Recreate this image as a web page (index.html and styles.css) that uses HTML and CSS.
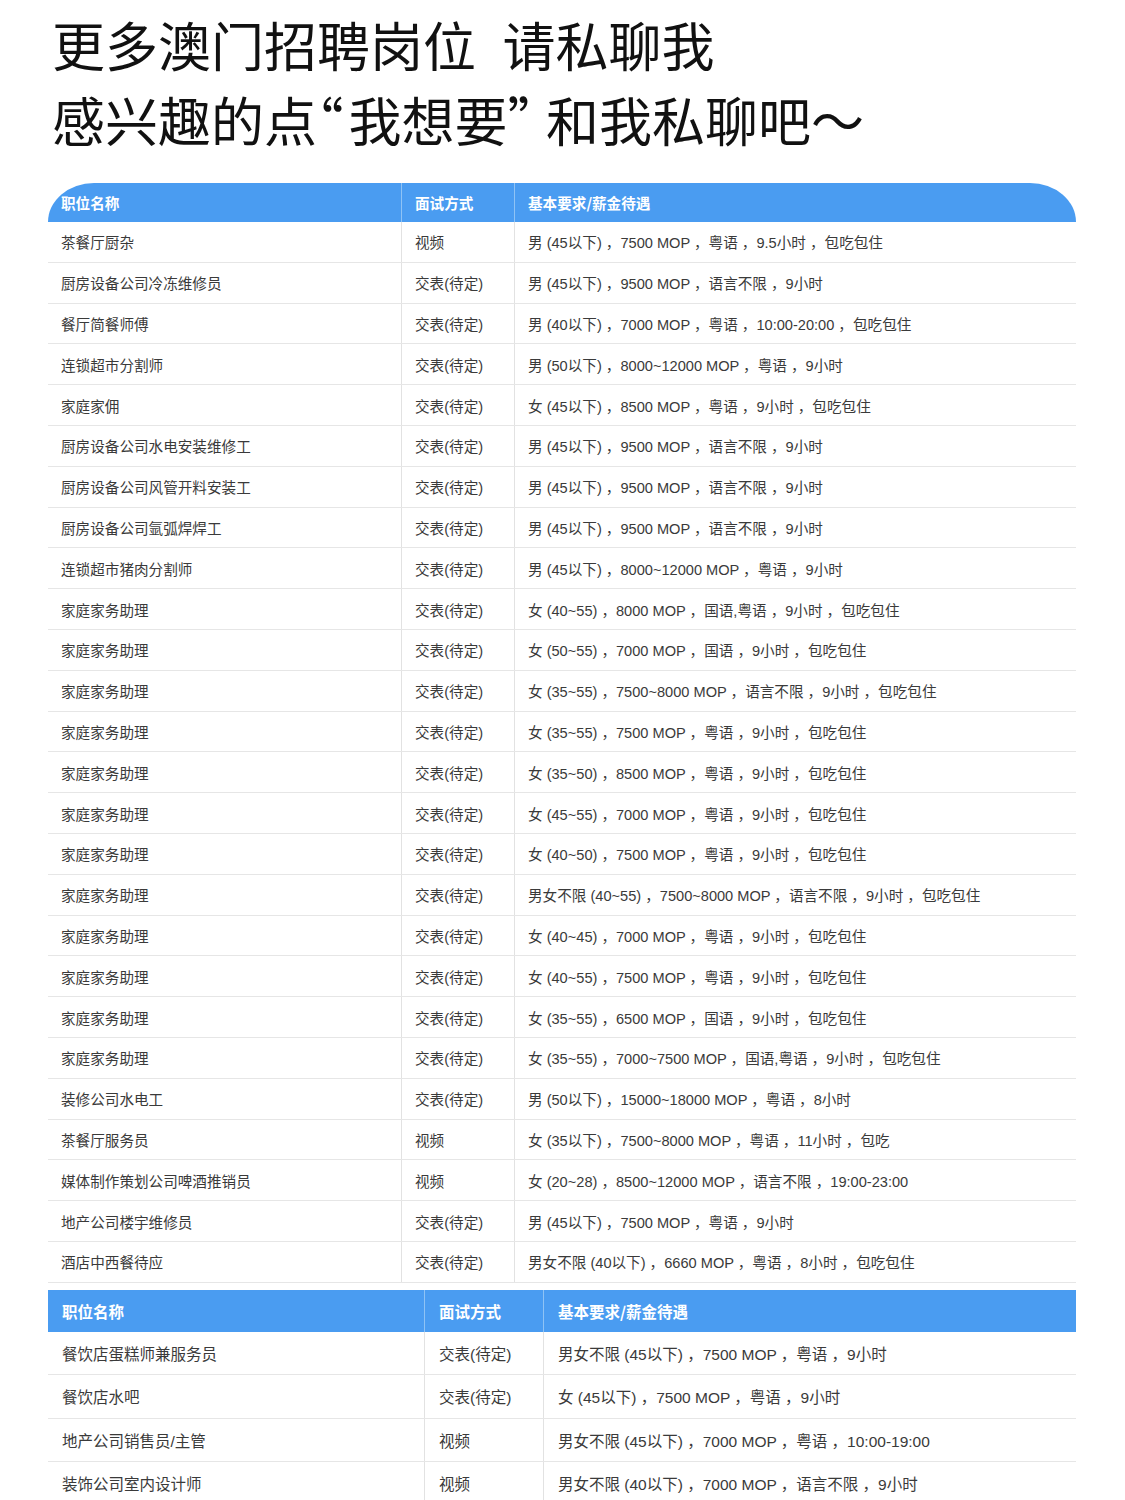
FILE: index.html
```html
<!DOCTYPE html>
<html lang="zh-CN">
<head>
<meta charset="utf-8">
<title>澳门招聘岗位</title>
<link rel="stylesheet" href="styles.css">
</head>
<body>
<div class="title">
  <div class="title-line">更多澳门招聘岗位&ensp;请私聊我</div>
  <div class="title-line">感兴趣的点<span class="ql">“</span>我想要<span class="qr">”</span>和我私聊吧～</div>
</div>

<div class="table t1">
  <div class="row head"><div class="c">职位名称</div><div class="c">面试方式</div><div class="c">基本要求/薪金待遇</div></div>
  <div class="row"><div class="c">茶餐厅厨杂</div><div class="c">视频</div><div class="c">男 (45以下) ，7500 MOP ，粤语 ，9.5小时 ，包吃包住</div></div>
  <div class="row"><div class="c">厨房设备公司冷冻维修员</div><div class="c">交表(待定)</div><div class="c">男 (45以下) ，9500 MOP ，语言不限 ，9小时</div></div>
  <div class="row"><div class="c">餐厅简餐师傅</div><div class="c">交表(待定)</div><div class="c">男 (40以下) ，7000 MOP ，粤语 ，10:00-20:00 ，包吃包住</div></div>
  <div class="row"><div class="c">连锁超市分割师</div><div class="c">交表(待定)</div><div class="c">男 (50以下) ，8000~12000 MOP ，粤语 ，9小时</div></div>
  <div class="row"><div class="c">家庭家佣</div><div class="c">交表(待定)</div><div class="c">女 (45以下) ，8500 MOP ，粤语 ，9小时 ，包吃包住</div></div>
  <div class="row"><div class="c">厨房设备公司水电安装维修工</div><div class="c">交表(待定)</div><div class="c">男 (45以下) ，9500 MOP ，语言不限 ，9小时</div></div>
  <div class="row"><div class="c">厨房设备公司风管开料安装工</div><div class="c">交表(待定)</div><div class="c">男 (45以下) ，9500 MOP ，语言不限 ，9小时</div></div>
  <div class="row"><div class="c">厨房设备公司氩弧焊焊工</div><div class="c">交表(待定)</div><div class="c">男 (45以下) ，9500 MOP ，语言不限 ，9小时</div></div>
  <div class="row"><div class="c">连锁超市猪肉分割师</div><div class="c">交表(待定)</div><div class="c">男 (45以下) ，8000~12000 MOP ，粤语 ，9小时</div></div>
  <div class="row"><div class="c">家庭家务助理</div><div class="c">交表(待定)</div><div class="c">女 (40~55) ，8000 MOP ，国语,粤语 ，9小时 ，包吃包住</div></div>
  <div class="row"><div class="c">家庭家务助理</div><div class="c">交表(待定)</div><div class="c">女 (50~55) ，7000 MOP ，国语 ，9小时 ，包吃包住</div></div>
  <div class="row"><div class="c">家庭家务助理</div><div class="c">交表(待定)</div><div class="c">女 (35~55) ，7500~8000 MOP ，语言不限 ，9小时 ，包吃包住</div></div>
  <div class="row"><div class="c">家庭家务助理</div><div class="c">交表(待定)</div><div class="c">女 (35~55) ，7500 MOP ，粤语 ，9小时 ，包吃包住</div></div>
  <div class="row"><div class="c">家庭家务助理</div><div class="c">交表(待定)</div><div class="c">女 (35~50) ，8500 MOP ，粤语 ，9小时 ，包吃包住</div></div>
  <div class="row"><div class="c">家庭家务助理</div><div class="c">交表(待定)</div><div class="c">女 (45~55) ，7000 MOP ，粤语 ，9小时 ，包吃包住</div></div>
  <div class="row"><div class="c">家庭家务助理</div><div class="c">交表(待定)</div><div class="c">女 (40~50) ，7500 MOP ，粤语 ，9小时 ，包吃包住</div></div>
  <div class="row"><div class="c">家庭家务助理</div><div class="c">交表(待定)</div><div class="c">男女不限 (40~55) ，7500~8000 MOP ，语言不限 ，9小时 ，包吃包住</div></div>
  <div class="row"><div class="c">家庭家务助理</div><div class="c">交表(待定)</div><div class="c">女 (40~45) ，7000 MOP ，粤语 ，9小时 ，包吃包住</div></div>
  <div class="row"><div class="c">家庭家务助理</div><div class="c">交表(待定)</div><div class="c">女 (40~55) ，7500 MOP ，粤语 ，9小时 ，包吃包住</div></div>
  <div class="row"><div class="c">家庭家务助理</div><div class="c">交表(待定)</div><div class="c">女 (35~55) ，6500 MOP ，国语 ，9小时 ，包吃包住</div></div>
  <div class="row"><div class="c">家庭家务助理</div><div class="c">交表(待定)</div><div class="c">女 (35~55) ，7000~7500 MOP ，国语,粤语 ，9小时 ，包吃包住</div></div>
  <div class="row"><div class="c">装修公司水电工</div><div class="c">交表(待定)</div><div class="c">男 (50以下) ，15000~18000 MOP ，粤语 ，8小时</div></div>
  <div class="row"><div class="c">茶餐厅服务员</div><div class="c">视频</div><div class="c">女 (35以下) ，7500~8000 MOP ，粤语 ，11小时 ，包吃</div></div>
  <div class="row"><div class="c">媒体制作策划公司啤酒推销员</div><div class="c">视频</div><div class="c">女 (20~28) ，8500~12000 MOP ，语言不限 ，19:00-23:00</div></div>
  <div class="row"><div class="c">地产公司楼宇维修员</div><div class="c">交表(待定)</div><div class="c">男 (45以下) ，7500 MOP ，粤语 ，9小时</div></div>
  <div class="row"><div class="c">酒店中西餐待应</div><div class="c">交表(待定)</div><div class="c">男女不限 (40以下) ，6660 MOP ，粤语 ，8小时 ，包吃包住</div></div>
</div>

<div class="table t2">
  <div class="row head"><div class="c">职位名称</div><div class="c">面试方式</div><div class="c">基本要求/薪金待遇</div></div>
  <div class="row"><div class="c">餐饮店蛋糕师兼服务员</div><div class="c">交表(待定)</div><div class="c">男女不限 (45以下) ，7500 MOP ，粤语 ，9小时</div></div>
  <div class="row"><div class="c">餐饮店水吧</div><div class="c">交表(待定)</div><div class="c">女 (45以下) ，7500 MOP ，粤语 ，9小时</div></div>
  <div class="row"><div class="c">地产公司销售员/主管</div><div class="c">视频</div><div class="c">男女不限 (45以下) ，7000 MOP ，粤语 ，10:00-19:00</div></div>
  <div class="row"><div class="c">装饰公司室内设计师</div><div class="c">视频</div><div class="c">男女不限 (40以下) ，7000 MOP ，语言不限 ，9小时</div></div>
</div>
</body>
</html>
```

FILE: styles.css
```css
html, body {
  margin: 0;
  padding: 0;
  background: #ffffff;
}
body {
  width: 1125px;
  height: 1500px;
  overflow: hidden;
  font-family: "Noto Sans CJK SC", "Noto Sans", "Liberation Sans", sans-serif;
  color: #333333;
}
.title {
  padding: 7px 0 0 52px;
}
.title-line {
  font-size: 53px;
  line-height: 75px;
  color: #111111;
  white-space: nowrap;
}
.ql,
.qr {
  font-feature-settings: "halt" 1;
}
.ql {
  margin-right: 5px;
}
.qr {
  margin-right: 12px;
}
.table {
  margin-left: 48px;
  width: 1028px;
}
.t1 {
  margin-top: 26px;
}
.t2 {
  margin-top: 7px;
}
.row {
  display: grid;
  box-sizing: border-box;
  border-bottom: 1px solid #e6e6e6;
  align-items: stretch;
}
.t1 .row {
  grid-template-columns: 353px 113px 562px;
  height: 40.8px;
  font-size: 14.6px;
}
.t2 .row {
  grid-template-columns: 376px 119px 533px;
  height: 43.5px;
  font-size: 15.5px;
}
.c {
  display: flex;
  align-items: center;
  white-space: pre;
  color: #3a3a3a;
  font-family: "Liberation Sans", "Noto Sans CJK SC", sans-serif;
}
.t1 .c {
  padding-left: 13px;
}
.t2 .c {
  padding-left: 14px;
}
.c + .c {
  border-left: 1px solid #e2e2e2;
}
.head {
  background: #4a9cf1;
  border-bottom: none;
}
.head .c {
  color: #ffffff;
  font-weight: bold;
  font-family: "Noto Sans CJK SC", sans-serif;
}
.head .c + .c {
  border-left: 1px solid #8fc3f5;
}
.t1 .head {
  height: 39px;
  border-radius: 46px 46px 0 0 / 39px 39px 0 0;
}
.t2 .head {
  height: 42px;
}
```
